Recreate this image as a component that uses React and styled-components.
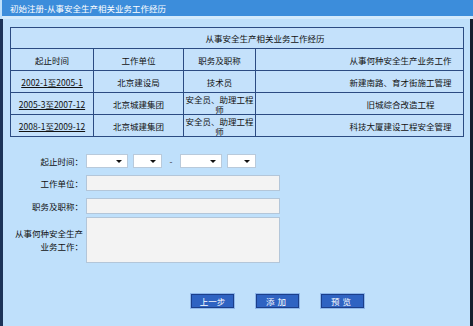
import React from 'react';
import styled, { createGlobalStyle } from 'styled-components';

const GlobalStyle = createGlobalStyle`
  html, body {
    margin: 0;
    padding: 0;
    background: #bfe0fb;
  }
  * {
    box-sizing: border-box;
  }
`;

const StyledPage = styled.div`
  width: 473px;
  height: 326px;
  display: flex;
  flex-direction: column;
  background-color: #bfe0fb;
  font-family: "Noto Sans CJK SC", "DejaVu Sans", sans-serif;
  font-size: 8.5px;
  color: #111;
  overflow: hidden;
`;

const StyledTitleBar = styled.div`
  height: 19px;
  margin-left: 2px;
  padding-left: 8px;
  line-height: 16px;
  color: #ffffff;
  background-color: #3c8ddb;
  border-bottom: 3px solid #d3eafc;
`;

const StyledBody = styled.div`
  flex: 1;
  display: flex;
  flex-direction: column;
  border-left: 3px solid #1b3358;
  border-right: 3px solid #17202c;
  padding: 8px 0 0 7px;
`;

const StyledTable = styled.table`
  width: 453px;
  border-collapse: collapse;
  border: 1px solid #2b4b82;
  table-layout: fixed;
`;

const StyledCell = styled.td`
  border: 1px solid #2b4b82;
  height: ${(p) => p.$h || 22}px;
  padding: 0 0 0 ${(p) => p.$shift || 0}px;
  text-align: center;
  line-height: 10px;
  background-color: #c4e1fb;
`;

const StyledLink = styled.a`
  color: #111;
  text-decoration: underline;
  cursor: pointer;
`;

const StyledForm = styled.div`
  display: flex;
  flex-direction: column;
  gap: 7px;
  margin-top: 17px;
  padding-left: 3px;
`;

const StyledRow = styled.div`
  display: flex;
  align-items: center;
  gap: 3px;
  margin-top: ${(p) => p.$top || 0}px;
`;

const StyledLabel = styled.div`
  width: 70px;
  text-align: right;
  line-height: 13px;
  white-space: nowrap;
`;

const StyledSelects = styled.div`
  display: flex;
  align-items: center;
  gap: 5px;
`;

const StyledSelect = styled.div`
  width: ${(p) => p.$w}px;
  height: 14px;
  display: flex;
  align-items: center;
  justify-content: flex-end;
  padding-right: 5px;
  background-color: #ffffff;
  border: 1px solid #b9cadb;
`;

const StyledCaret = styled.span`
  width: 0;
  height: 0;
  border-left: 3px solid transparent;
  border-right: 3px solid transparent;
  border-top: 3px solid #111;
`;

const StyledDash = styled.span`
  width: 8px;
  text-align: center;
  color: #333;
`;

const StyledInput = styled.div`
  width: 194px;
  height: ${(p) => p.$h || 16}px;
  background-color: #f3f3f3;
  border: 1px solid #b3c6d9;
`;

const StyledButtons = styled.div`
  display: flex;
  gap: 22px;
  margin-top: 31px;
  padding-left: 181px;
`;

const StyledButton = styled.button`
  width: 43px;
  height: 14px;
  padding: 0;
  font-family: "Noto Sans CJK SC", sans-serif;
  font-size: 8.5px;
  line-height: 10px;
  color: #ffffff;
  letter-spacing: ${(p) => p.$spaced ? '3px' : '0'};
  background-color: #2f63c2;
  border: 1px solid #1c3f8a;
  box-shadow: 0 0 0 1px #8fb7ea;
`;

const rows = [
    { time: '2002-1至2005-1', unit: '北京建设局', title: '技术员', work: '新建南路、育才街施工管理' },
    { time: '2005-3至2007-12', unit: '北京城建集团', title: '安全员、助理工程师', work: '旧城综合改造工程' },
    { time: '2008-1至2009-12', unit: '北京城建集团', title: '安全员、助理工程师', work: '科技大厦建设工程安全管理' },
];

const Select = ({ w }) => (
    <StyledSelect $w={w}>
        <StyledCaret />
    </StyledSelect>
);

const App = () => {
    return (
        <StyledPage>
            <GlobalStyle />
            <StyledTitleBar>初始注册-从事安全生产相关业务工作经历</StyledTitleBar>
            <StyledBody>
                <StyledTable>
                    <colgroup>
                        <col style={{ width: 83 }} />
                        <col style={{ width: 90 }} />
                        <col style={{ width: 72 }} />
                        <col style={{ width: 208 }} />
                    </colgroup>
                    <tbody>
                        <tr>
                            <StyledCell colSpan={4} $h={21} $shift={56}>从事安全生产相关业务工作经历</StyledCell>
                        </tr>
                        <tr>
                            <StyledCell>起止时间</StyledCell>
                            <StyledCell>工作单位</StyledCell>
                            <StyledCell>职务及职称</StyledCell>
                            <StyledCell $shift={82}>从事何种安全生产业务工作</StyledCell>
                        </tr>
                        {rows.map((r) => (
                            <tr key={r.time}>
                                <StyledCell><StyledLink>{r.time}</StyledLink></StyledCell>
                                <StyledCell>{r.unit}</StyledCell>
                                <StyledCell>{r.title}</StyledCell>
                                <StyledCell $shift={82}>{r.work}</StyledCell>
                            </tr>
                        ))}
                    </tbody>
                </StyledTable>

                <StyledForm>
                    <StyledRow>
                        <StyledLabel>起止时间：</StyledLabel>
                        <StyledSelects>
                            <Select w={42} />
                            <Select w={29} />
                            <StyledDash>-</StyledDash>
                            <Select w={42} />
                            <Select w={29} />
                        </StyledSelects>
                    </StyledRow>
                    <StyledRow>
                        <StyledLabel>工作单位：</StyledLabel>
                        <StyledInput />
                    </StyledRow>
                    <StyledRow>
                        <StyledLabel>职务及职称：</StyledLabel>
                        <StyledInput />
                    </StyledRow>
                    <StyledRow $top={-4}>
                        <StyledLabel>从事何种安全生产<br />业务工作：</StyledLabel>
                        <StyledInput $h={46} />
                    </StyledRow>
                </StyledForm>

                <StyledButtons>
                    <StyledButton>上一步</StyledButton>
                    <StyledButton $spaced>添加</StyledButton>
                    <StyledButton $spaced>预览</StyledButton>
                </StyledButtons>
            </StyledBody>
        </StyledPage>
    );
};

export default App;
